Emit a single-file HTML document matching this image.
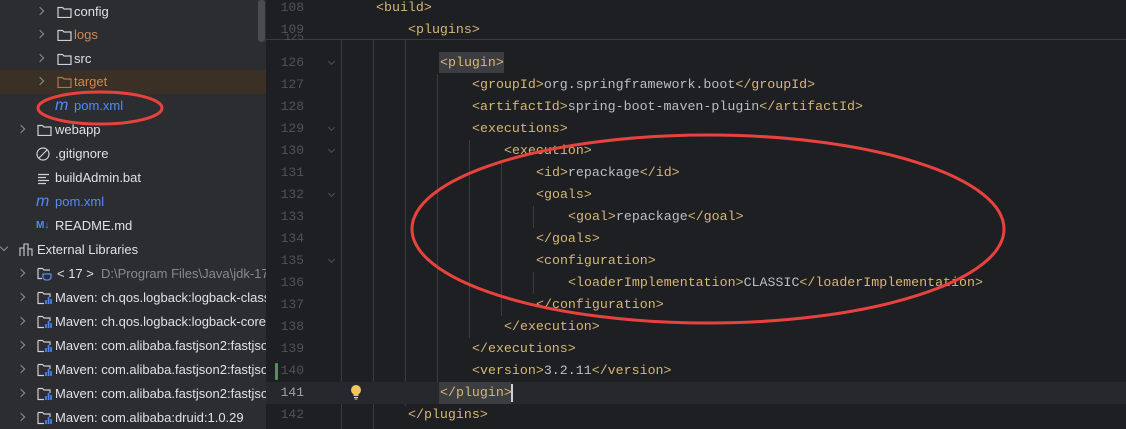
<!DOCTYPE html>
<html><head><meta charset="utf-8"><style>
*{margin:0;padding:0;box-sizing:border-box}
body{width:1126px;height:429px;overflow:hidden;background:#1e1f22;position:relative;font-family:"Liberation Sans","Noto Sans CJK SC",sans-serif}
#side{position:absolute;left:0;top:0;width:266px;height:429px;background:#2b2d30;overflow:hidden}
.row{position:absolute;left:0;width:266px;height:24px;font-size:13px;color:#dfe1e5;line-height:24px;white-space:nowrap}
.row .t{position:absolute}
.chev{position:absolute;top:8px;width:6px;height:6px;border-right:1.3px solid #8c8f94;border-bottom:1.3px solid #8c8f94;transform:rotate(-45deg)}
.fold{position:absolute;top:6px;width:15px;height:12px}
#ed{position:absolute;left:266px;top:0;right:0;bottom:0}
.ln{position:absolute;left:0;width:38px;text-align:right;font-family:"Liberation Mono",monospace;font-size:13px;color:#4e535b;height:22px;line-height:22px}
.code{position:absolute;font-family:"Liberation Mono",monospace;font-size:13.3px;color:#d5b778;height:22px;line-height:22px;white-space:pre}
.v{color:#bcbec4}
.g{position:absolute;width:1px;background:#393b40}
.fa{position:absolute;left:63px;width:5px;height:5px;border-right:1px solid #4b5059;border-bottom:1px solid #4b5059;transform:rotate(45deg)}
</style></head><body>
<div id="side">
<div class="row" style="top:0"><div class="chev" style="left:37px"></div><svg class="fold" style="left:57px" viewBox="0 0 15 12"><path d="M1 1.5h4.5l1.5 1.5h7v8.5h-13z" fill="none" stroke="#ced0d6" stroke-width="1.2"/></svg><span class="t" style="left:74px">config</span></div>
<div class="row" style="top:23px"><div class="chev" style="left:37px"></div><svg class="fold" style="left:57px" viewBox="0 0 15 12"><path d="M1 1.5h4.5l1.5 1.5h7v8.5h-13z" fill="none" stroke="#ced0d6" stroke-width="1.2"/></svg><span class="t" style="left:74px;color:#c88a58">logs</span></div>
<div class="row" style="top:47px"><div class="chev" style="left:37px"></div><svg class="fold" style="left:57px" viewBox="0 0 15 12"><path d="M1 1.5h4.5l1.5 1.5h7v8.5h-13z" fill="none" stroke="#ced0d6" stroke-width="1.2"/></svg><span class="t" style="left:74px">src</span></div>
<div class="row" style="top:70px;background:#3a3026"><div class="chev" style="left:37px"></div><svg class="fold" style="left:57px" viewBox="0 0 15 12"><path d="M1 1.5h4.5l1.5 1.5h7v8.5h-13z" fill="none" stroke="#c0703f" stroke-width="1.2"/></svg><span class="t" style="left:74px;color:#c88a58">target</span></div>
<div class="row" style="top:94px"><span class="t" style="left:55px;color:#548af7;font-style:italic;font-size:16px">m</span><span class="t" style="left:74px;color:#548af7">pom.xml</span></div>
<div class="row" style="top:118px"><div class="chev" style="left:18px"></div><svg class="fold" style="left:37px" viewBox="0 0 15 12"><path d="M1 1.5h4.5l1.5 1.5h7v8.5h-13z" fill="none" stroke="#ced0d6" stroke-width="1.2"/></svg><span class="t" style="left:55px">webapp</span></div>
<div class="row" style="top:142px"><svg class="fold" style="left:36px;top:5px;width:14px;height:14px" viewBox="0 0 14 14"><circle cx="7" cy="7" r="6" fill="none" stroke="#ced0d6" stroke-width="1.2"/><path d="M3 11L11 3" stroke="#ced0d6" stroke-width="1.2"/></svg><span class="t" style="left:55px">.gitignore</span></div>
<div class="row" style="top:166px"><svg class="fold" style="left:37px;top:7px" viewBox="0 0 15 12"><path d="M1 1.5h11M1 4.5h8M1 7.5h11M1 10.5h8" stroke="#ced0d6" stroke-width="1.2"/></svg><span class="t" style="left:55px">buildAdmin.bat</span></div>
<div class="row" style="top:190px"><span class="t" style="left:36px;color:#548af7;font-style:italic;font-size:16px">m</span><span class="t" style="left:55px;color:#548af7">pom.xml</span></div>
<div class="row" style="top:214px"><span class="t" style="left:36px;color:#548af7;font-size:10px;font-weight:bold">M↓</span><span class="t" style="left:55px">README.md</span></div>
<div class="row" style="top:238px"><div class="chev" style="left:1px;top:6px;transform:rotate(45deg)"></div><svg class="fold" style="left:19px;top:5px;width:14px;height:14px" viewBox="0 0 14 14"><path d="M1 13V5h4v8M5 13V1h4v12M9 13V6h4v7" fill="none" stroke="#ced0d6" stroke-width="1.1"/></svg><span class="t" style="left:37px">External Libraries</span></div>
<div class="row" style="top:262px"><div class="chev" style="left:18px"></div><svg class="fold" style="left:37px;width:16px;height:14px;top:5px" viewBox="0 0 16 14"><path d="M1 1.5h4.5l1.5 1.5h6M1 1.5v10h4" fill="none" stroke="#ced0d6" stroke-width="1.2"/><path d="M6 7h8v3a3 3 0 0 1-3 3h-2a3 3 0 0 1-3-3z" fill="none" stroke="#548af7" stroke-width="1.3"/></svg><span class="t" style="left:57px">&lt; 17 &gt;</span><span class="t" style="left:101px;color:#868a91">D:\Program Files\Java\jdk-17</span></div>
<div class="row" style="top:286px"><div class="chev" style="left:18px"></div><svg class="fold" style="left:37px;width:16px;height:14px;top:5px" viewBox="0 0 16 14"><path d="M1 1.5h4.5l1.5 1.5h6v3M1 1.5v11h6" fill="none" stroke="#ced0d6" stroke-width="1.2"/><path d="M9 13V9M11.5 13V6M14 13V8" stroke="#548af7" stroke-width="1.6"/></svg><span class="t" style="left:55px">Maven: ch.qos.logback:logback-classic</span></div>
<div class="row" style="top:310px"><div class="chev" style="left:18px"></div><svg class="fold" style="left:37px;width:16px;height:14px;top:5px" viewBox="0 0 16 14"><path d="M1 1.5h4.5l1.5 1.5h6v3M1 1.5v11h6" fill="none" stroke="#ced0d6" stroke-width="1.2"/><path d="M9 13V9M11.5 13V6M14 13V8" stroke="#548af7" stroke-width="1.6"/></svg><span class="t" style="left:55px">Maven: ch.qos.logback:logback-core</span></div>
<div class="row" style="top:334px"><div class="chev" style="left:18px"></div><svg class="fold" style="left:37px;width:16px;height:14px;top:5px" viewBox="0 0 16 14"><path d="M1 1.5h4.5l1.5 1.5h6v3M1 1.5v11h6" fill="none" stroke="#ced0d6" stroke-width="1.2"/><path d="M9 13V9M11.5 13V6M14 13V8" stroke="#548af7" stroke-width="1.6"/></svg><span class="t" style="left:55px">Maven: com.alibaba.fastjson2:fastjson2</span></div>
<div class="row" style="top:358px"><div class="chev" style="left:18px"></div><svg class="fold" style="left:37px;width:16px;height:14px;top:5px" viewBox="0 0 16 14"><path d="M1 1.5h4.5l1.5 1.5h6v3M1 1.5v11h6" fill="none" stroke="#ced0d6" stroke-width="1.2"/><path d="M9 13V9M11.5 13V6M14 13V8" stroke="#548af7" stroke-width="1.6"/></svg><span class="t" style="left:55px">Maven: com.alibaba.fastjson2:fastjson2</span></div>
<div class="row" style="top:382px"><div class="chev" style="left:18px"></div><svg class="fold" style="left:37px;width:16px;height:14px;top:5px" viewBox="0 0 16 14"><path d="M1 1.5h4.5l1.5 1.5h6v3M1 1.5v11h6" fill="none" stroke="#ced0d6" stroke-width="1.2"/><path d="M9 13V9M11.5 13V6M14 13V8" stroke="#548af7" stroke-width="1.6"/></svg><span class="t" style="left:55px">Maven: com.alibaba.fastjson2:fastjson2</span></div>
<div class="row" style="top:406px"><div class="chev" style="left:18px"></div><svg class="fold" style="left:37px;width:16px;height:14px;top:5px" viewBox="0 0 16 14"><path d="M1 1.5h4.5l1.5 1.5h6v3M1 1.5v11h6" fill="none" stroke="#ced0d6" stroke-width="1.2"/><path d="M9 13V9M11.5 13V6M14 13V8" stroke="#548af7" stroke-width="1.6"/></svg><span class="t" style="left:55px">Maven: com.alibaba:druid:1.0.29</span></div>
<div style="position:absolute;left:258px;top:0;width:7px;height:42px;background:#4a4c50;border-radius:3px"></div>
</div>
<div id="ed">
<div class="g" style="left:75px;top:40px;height:389px"></div>
<div class="g" style="left:107px;top:40px;height:389px"></div>
<div class="g" style="left:139px;top:40px;height:366px"></div>
<div class="g" style="left:171px;top:74px;height:308px"></div>
<div class="g" style="left:203px;top:140px;height:198px"></div>
<div class="g" style="left:235px;top:162px;height:154px"></div>
<div class="g" style="left:267px;top:206px;height:22px"></div>
<div class="g" style="left:267px;top:272px;height:22px"></div>
<div style="position:absolute;left:0;top:382px;width:860px;height:22px;background:#26282e"></div>
<div style="position:absolute;left:173px;top:52px;width:65px;height:21px;background:#3b3d41"></div>
<div style="position:absolute;left:173px;top:382px;width:72px;height:22px;background:#3b3d41"></div>
<div style="position:absolute;left:245px;top:384px;width:2px;height:18px;background:#ced0d6"></div>
<div style="position:absolute;left:9px;top:363px;width:3px;height:17px;background:#549159;border-radius:1px"></div>
<svg style="position:absolute;left:84px;top:384px" width="12" height="16" viewBox="0 0 12 16"><circle cx="6" cy="6" r="5" fill="#f2c55c"/><rect x="3.5" y="9" width="5" height="3" fill="#f2c55c"/><path d="M4 13.5h4M4.5 15h3" stroke="#ced0d6" stroke-width="1"/></svg>
<div class="ln" style="top:52px">126</div><div class="fa" style="top:59px"></div>
<div class="code" style="left:174px;top:52px">&lt;plugin&gt;</div>
<div class="ln" style="top:74px">127</div><div class="code" style="left:206px;top:74px">&lt;groupId&gt;<span class="v">org.springframework.boot</span>&lt;/groupId&gt;</div>
<div class="ln" style="top:96px">128</div><div class="code" style="left:206px;top:96px">&lt;artifactId&gt;<span class="v">spring-boot-maven-plugin</span>&lt;/artifactId&gt;</div>
<div class="ln" style="top:118px">129</div><div class="fa" style="top:125px"></div><div class="code" style="left:206px;top:118px">&lt;executions&gt;</div>
<div class="ln" style="top:140px">130</div><div class="fa" style="top:147px"></div><div class="code" style="left:238px;top:140px">&lt;execution&gt;</div>
<div class="ln" style="top:162px">131</div><div class="code" style="left:270px;top:162px">&lt;id&gt;<span class="v">repackage</span>&lt;/id&gt;</div>
<div class="ln" style="top:184px">132</div><div class="fa" style="top:191px"></div><div class="code" style="left:270px;top:184px">&lt;goals&gt;</div>
<div class="ln" style="top:206px">133</div><div class="code" style="left:302px;top:206px">&lt;goal&gt;<span class="v">repackage</span>&lt;/goal&gt;</div>
<div class="ln" style="top:228px">134</div><div class="code" style="left:270px;top:228px">&lt;/goals&gt;</div>
<div class="ln" style="top:250px">135</div><div class="fa" style="top:257px"></div><div class="code" style="left:270px;top:250px">&lt;configuration&gt;</div>
<div class="ln" style="top:272px">136</div><div class="code" style="left:302px;top:272px">&lt;loaderImplementation&gt;<span class="v">CLASSIC</span>&lt;/loaderImplementation&gt;</div>
<div class="ln" style="top:294px">137</div><div class="code" style="left:270px;top:294px">&lt;/configuration&gt;</div>
<div class="ln" style="top:316px">138</div><div class="code" style="left:238px;top:316px">&lt;/execution&gt;</div>
<div class="ln" style="top:338px">139</div><div class="code" style="left:206px;top:338px">&lt;/executions&gt;</div>
<div class="ln" style="top:360px">140</div><div class="code" style="left:206px;top:360px">&lt;version&gt;<span class="v">3.2.11</span>&lt;/version&gt;</div>
<div class="ln" style="top:382px;color:#a1a3ab">141</div><div class="code" style="left:174px;top:382px">&lt;/plugin&gt;</div>
<div class="ln" style="top:404px">142</div><div class="code" style="left:142px;top:404px">&lt;/plugins&gt;</div>
<div style="position:absolute;left:0;top:0;width:860px;height:40px;background:#1e1f22;border-bottom:1px solid #393b40;overflow:hidden">
<div class="ln" style="top:-3px">108</div><div class="code" style="left:110px;top:-3px">&lt;build&gt;</div>
<div class="ln" style="top:19px">109</div><div class="code" style="left:142px;top:19px">&lt;plugins&gt;</div>
</div>
<div class="ln" style="top:34px;height:8px;line-height:8px;overflow:hidden;font-size:11px">125</div>
</div>
<svg style="position:absolute;left:0;top:0" width="1126" height="429">
<ellipse cx="100" cy="108" rx="62" ry="16" fill="none" stroke="#e8423f" stroke-width="3"/>
<ellipse cx="708" cy="229" rx="296" ry="94" fill="none" stroke="#e8423f" stroke-width="3"/>
</svg>
</body></html>
